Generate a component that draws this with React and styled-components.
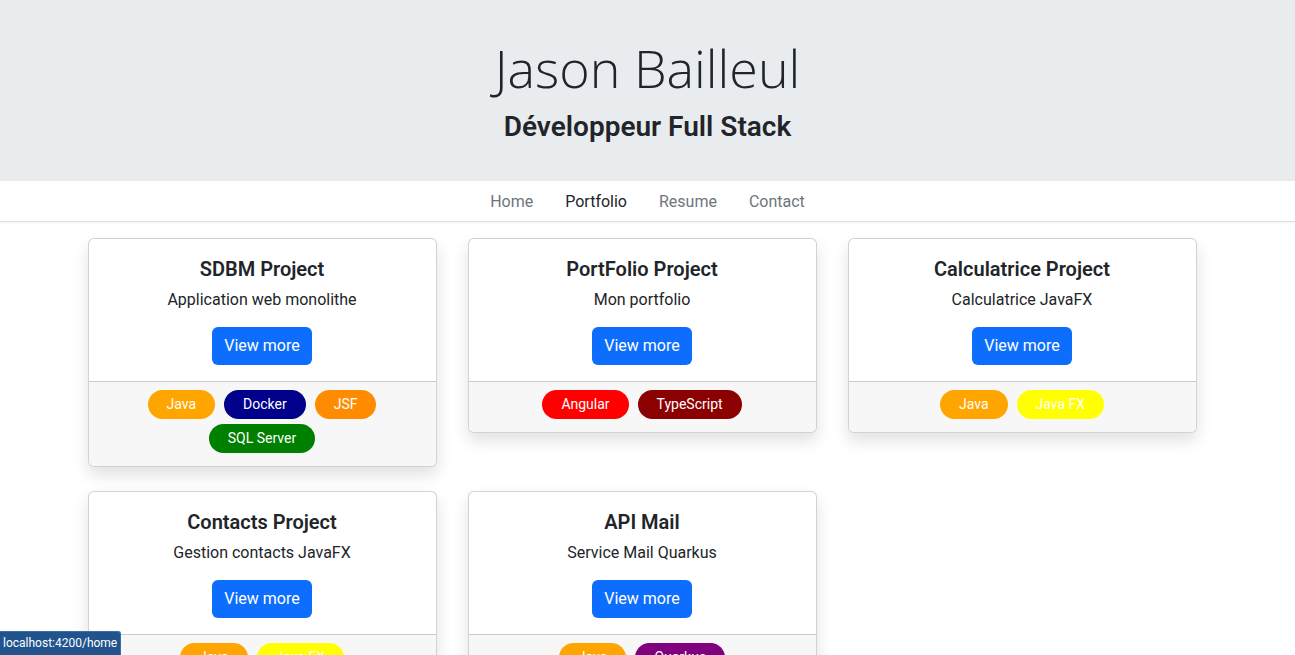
import React from "react";
import styled, { createGlobalStyle } from "styled-components";

const GlobalStyle = createGlobalStyle`
  html { scrollbar-width: none; }
  html::-webkit-scrollbar { display: none; }
  body {
    margin: 0;
    font-family: Roboto, "Noto Sans", sans-serif;
    font-size: 16px;
    line-height: 1.5;
    color: #212529;
    background: #fff;
  }
  * { box-sizing: border-box; }
`;

const Header = styled.header`
  background: #e9ecef;
  text-align: center;
  padding: 37px 16px 37px;
`;

const Name = styled.h1`
  margin: 0;
  font-family: "Open Sans", Roboto, sans-serif;
  font-weight: 300;
  font-size: 52px;
  line-height: 1.2;
  color: #212529;
`;

const Role = styled.h2`
  margin: 11px 0 0;
  font-size: 28px;
  font-weight: 600;
  line-height: 1.2;
  color: #212529;
`;

const Nav = styled.nav`
  display: flex;
  justify-content: center;
  background: #fff;
  border-bottom: 1px solid #dee2e6;
  box-shadow: 0 1px 2px rgba(0, 0, 0, 0.06);
`;

const NavLink = styled.a`
  padding: 9px 16px 7px;
  font-size: 16px;
  line-height: 24px;
  text-decoration: none;
  color: ${(p) => (p.$active ? "#212529" : "#6c757d")};
  cursor: pointer;
`;

const Main = styled.main`
  max-width: 1140px;
  margin: 0 auto;
  padding: 16px 10px 40px;
`;

const Grid = styled.div`
  display: grid;
  grid-template-columns: repeat(3, 349px);
  column-gap: 31px;
  row-gap: 24px;
  align-items: start;
`;

const Card = styled.article`
  background: #fff;
  border: 1px solid rgba(0, 0, 0, 0.175);
  border-radius: 6px;
  box-shadow: 0 8px 16px rgba(0, 0, 0, 0.12);
  overflow: hidden;
`;

const CardBody = styled.div`
  padding: 16px;
  text-align: center;
`;

const CardTitle = styled.h5`
  margin: 0 0 7px;
  padding-top: 2px;
  font-size: 20px;
  font-weight: 600;
  line-height: 1.2;
`;

const CardText = styled.p`
  margin: 0 0 15px;
  font-size: 16px;
  line-height: 24px;
`;

const Button = styled.button`
  font-family: inherit;
  font-size: 16px;
  line-height: 24px;
  padding: 7px 12px;
  color: #fff;
  background: #0d6efd;
  border: 0;
  border-radius: 6px;
  cursor: pointer;
`;

const CardFooter = styled.div`
  display: flex;
  flex-wrap: wrap;
  justify-content: center;
  gap: 5px 9px;
  padding: 8px 56px 13px;
  background: #f7f7f7;
  border-top: 1px solid rgba(0, 0, 0, 0.175);
`;

const Pill = styled.span`
  display: inline-block;
  padding: 4px 19px;
  font-size: 14px;
  line-height: 21px;
  color: #fff;
  background: ${(p) => p.$bg};
  border-radius: 50px;
`;

const StatusBar = styled.div`
  position: fixed;
  left: 0;
  bottom: 0;
  padding: 2px 3px 3px 3px;
  font-size: 12px;
  line-height: 18px;
  color: #fff;
  background: #21538c;
  border-top: 1px solid #3b6ea6;
  border-right: 1px solid #3b6ea6;
  border-top-right-radius: 3px;
`;

const projects = [
  {
    title: "SDBM Project",
    text: "Application web monolithe",
    tags: [
      ["Java", "#ffa500"],
      ["Docker", "#00008b"],
      ["JSF", "#ff8c00"],
      ["SQL Server", "#008000"],
    ],
  },
  {
    title: "PortFolio Project",
    text: "Mon portfolio",
    tags: [
      ["Angular", "#ff0000"],
      ["TypeScript", "#8b0000"],
    ],
  },
  {
    title: "Calculatrice Project",
    text: "Calculatrice JavaFX",
    tags: [
      ["Java", "#ffa500"],
      ["Java FX", "#ffff00"],
    ],
  },
  {
    title: "Contacts Project",
    text: "Gestion contacts JavaFX",
    tags: [
      ["Java", "#ffa500"],
      ["Java FX", "#ffff00"],
    ],
  },
  {
    title: "API Mail",
    text: "Service Mail Quarkus",
    tags: [
      ["Java", "#ffa500"],
      ["Quarkus", "#800080"],
    ],
  },
];

export default function App() {
  return (
    <>
      <GlobalStyle />
      <Header>
        <Name>Jason Bailleul</Name>
        <Role>Développeur Full Stack</Role>
      </Header>
      <Nav>
        <NavLink>Home</NavLink>
        <NavLink $active>Portfolio</NavLink>
        <NavLink>Resume</NavLink>
        <NavLink>Contact</NavLink>
      </Nav>
      <Main>
        <Grid>
          {projects.map((p) => (
            <Card key={p.title}>
              <CardBody>
                <CardTitle>{p.title}</CardTitle>
                <CardText>{p.text}</CardText>
                <Button>View more</Button>
              </CardBody>
              <CardFooter>
                {p.tags.map(([name, bg]) => (
                  <Pill key={name} $bg={bg}>
                    {name}
                  </Pill>
                ))}
              </CardFooter>
            </Card>
          ))}
        </Grid>
      </Main>
      <StatusBar>localhost:4200/home</StatusBar>
    </>
  );
}
